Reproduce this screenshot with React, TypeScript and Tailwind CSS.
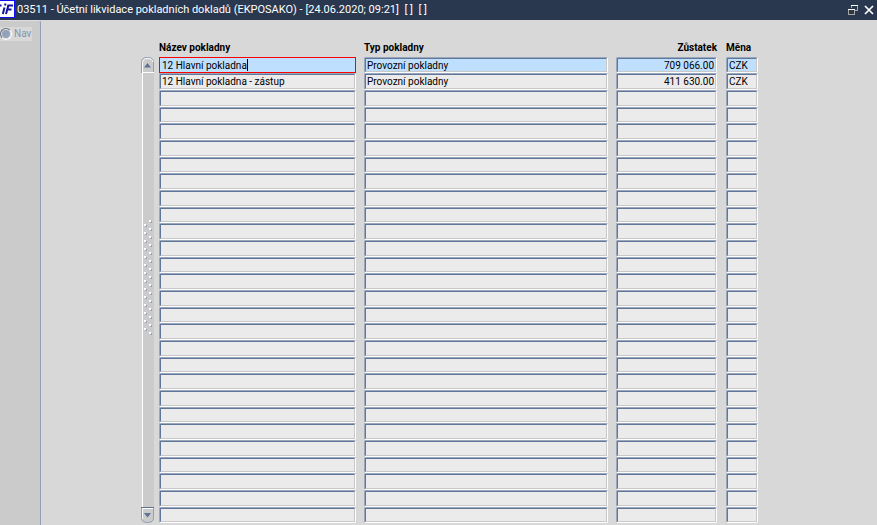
import { useState } from "react";
import clsx from "clsx";

type CashDesk = {
  name: string;
  type: string;
  balance: string;
  currency: string;
};

type FieldProps = {
  label: string;
  value: string;
  selected?: boolean;
  current?: boolean;
  alignRight?: boolean;
  onFocus: () => void;
};

const ROW_COUNT = 28;

const CASH_DESKS: CashDesk[] = [
  {
    name: "12 Hlavní pokladna",
    type: "Provozní pokladny",
    balance: "709 066.00",
    currency: "CZK",
  },
  {
    name: "12 Hlavní pokladna - zástup",
    type: "Provozní pokladny",
    balance: "411 630.00",
    currency: "CZK",
  },
];

const EMPTY: CashDesk = { name: "", type: "", balance: "", currency: "" };

const ROWS = Array.from({ length: ROW_COUNT }, (_, i) => CASH_DESKS[i] ?? EMPTY);

function Field({
  label,
  value,
  selected,
  current,
  alignRight,
  onFocus,
}: FieldProps) {
  return (
    <div
      className={clsx(
        "relative h-full",
        current
          ? "bg-[#ff0000] p-px"
          : "rounded-[2px] border border-t-[#9aa7bb] border-r-white border-b-white border-l-[#9aa7bb]",
      )}
    >
      <input
        type="text"
        readOnly
        aria-label={label}
        defaultValue={value}
        onFocus={onFocus}
        className={clsx(
          "block h-full w-full text-[10px] leading-3 text-black outline-none",
          selected ? "bg-[#bfdfff]" : "bg-[#ebebeb]",
          current
            ? "px-0.5"
            : "border border-t-[#60769a] border-r-[#c8c8c8] border-b-[#c8c8c8] border-l-[#60769a] px-px",
          alignRight && "text-right",
        )}
      />
      {current && (
        <span className="pointer-events-none absolute top-0.5 left-[3px] h-3 border-r border-black text-[10px] leading-3 whitespace-pre text-transparent select-none">
          {value}
        </span>
      )}
    </div>
  );
}

function TitleBar() {
  return (
    <header className="flex h-5 items-center bg-[#2a384f] pr-[3px] text-white">
      <svg
        viewBox="0 0 15 18"
        className="h-[18px] w-[15px] self-start"
        aria-hidden="true"
      >
        <rect width="15" height="18" fill="#1010f0" />
        <rect width="14" height="16" y="1" fill="#fff" />
        <path
          d="M0 5.500h1.500M4.500 7.500 2.800 14M5.500 3.500 5 5.500M8.500 5 6 14M7.500 9.500h4"
          stroke="#14149c"
          strokeWidth="2"
          fill="none"
        />
        <path d="M7.500 5.500h5.500" stroke="#14149c" strokeWidth="2" />
      </svg>
      <h1 className="ml-0.5 flex-1 pb-px text-[11px] leading-4 whitespace-pre">
        03511 - Účetní likvidace pokladních dokladů (EKPOSAKO) - [24.06.2020;
        09:21]{"  [ ]  [ ]"}
      </h1>
      <button type="button" aria-label="Obnovit" className="mr-1.5">
        <svg viewBox="0 0 10 10" className="size-2.5" shapeRendering="crispEdges">
          <path d="M3.500 3V.5h6v5H7M.5 4v5.500h6V4" fill="none" stroke="#a9a69f" />
          <path d="M3 .5h7M0 4.500h7" fill="none" stroke="#fff" />
        </svg>
      </button>
      <button type="button" aria-label="Zavřít">
        <svg viewBox="0 0 10 10" className="size-2.5">
          <path d="m1 1 8 8M9 1 1 9" stroke="#fff" strokeWidth="1.700" />
        </svg>
      </button>
    </header>
  );
}

function ScrollRail() {
  return (
    <div className="mt-[17px] flex w-3 flex-col items-stretch border-l border-white bg-[#cbcbcb]">
      <button type="button" aria-label="Nahoru" className="-ml-0.5 h-4 bg-[#d8d8d8]">
        <svg viewBox="0 0 13 16" className="h-4 w-[13px]">
          <path d="M.5 16V5Q.5.5 6.500.5T12.500 5v11" fill="#cbcbcb" stroke="#91a0b8" />
          <path d="M1.500 15V6Q1.500 1.500 6.500 1.500T12 5M1 15.500h12" fill="none" stroke="#fff" />
          <path d="M6.500 6 10 10.500H3z" fill="#5d7396" />
        </svg>
      </button>
      <div className="flex flex-1 items-center justify-center">
        <svg viewBox="0 0 9 116" className="-mt-6 h-[116px] w-[9px]" shapeRendering="crispEdges">
          {Array.from({ length: 29 }, (_, i) => {
            const x = i % 2 === 0 ? 5 : 0;
            return (
              <g key={i}>
                <rect x={x + 1} y={i * 4 + 1} width="2" height="2" fill="#98a6bd" />
                <rect x={x} y={i * 4} width="2" height="2" fill="#fff" />
              </g>
            );
          })}
        </svg>
      </div>
      <button type="button" aria-label="Dolů" className="-ml-0.5 h-4 bg-[#d8d8d8]">
        <svg viewBox="0 0 13 16" className="h-4 w-[13px]">
          <path d="M.5 0v11q0 4.500 6 4.500t6-4.500V0" fill="#cbcbcb" stroke="#91a0b8" />
          <path d="M1.500 12V1.500H12" fill="none" stroke="#fff" />
          <path d="M0 .5h13" stroke="#5d7396" />
          <path d="M3 6h7L6.500 10.500z" fill="#5d7396" />
        </svg>
      </button>
    </div>
  );
}

export default function App() {
  const [selected, setSelected] = useState(0);

  return (
    <div className="flex min-h-screen flex-col bg-[#d8d8d8] font-[Roboto,Arial,sans-serif]">
      <TitleBar />
      <div className="flex flex-1">
        <aside className="w-[41px] shrink-0 rounded-tr-[3px] border-t border-r border-t-[#dedede] border-r-[#91a0b8] bg-[#cbcbcb] pt-1.5">
          <label className="flex h-3.5 w-8 items-center gap-0.5 bg-[#d8d8d8] text-[10px] leading-3.5 text-[#8495b0]">
            <input
              type="radio"
              name="nav"
              className="size-3 shrink-0 appearance-none rounded-full border border-t-[#6f7580] border-r-white border-b-white border-l-[#6f7580] bg-[#92a2bb] shadow-[inset_0_0_0_1px_#e4e4e4]"
            />
            Nav
          </label>
        </aside>

        <main className="flex flex-1 gap-[5px] pt-5 pr-[119px] pb-0.5 pl-[101px]">
          <ScrollRail />
          <table className="w-full table-fixed border-collapse">
            <colgroup>
              <col className="w-[205px]" />
              <col />
              <col className="w-[110px]" />
              <col className="w-8" />
            </colgroup>
            <thead>
              <tr className="h-[17px] text-left text-[10px] leading-3 text-black">
                <th className="p-0 pt-0.5 align-top">Název pokladny</th>
                <th className="p-0 pt-0.5 align-top">Typ pokladny</th>
                <th className="p-0 pt-0.5 pr-[9px] text-right align-top">Zůstatek</th>
                <th className="p-0 pt-0.5 align-top">Měna</th>
              </tr>
            </thead>
            <tbody>
              {ROWS.map((row, i) => {
                const common = {
                  selected: i === selected,
                  onFocus: () => setSelected(i),
                };
                const cell = i % 3 === 0 ? "h-4 p-0" : "h-[17px] p-0";
                return (
                  <tr key={i}>
                    <td className={clsx(cell, "pr-2")}>
                      <Field
                        label="Název pokladny"
                        value={row.name}
                        current={i === selected}
                        {...common}
                      />
                    </td>
                    <td className={clsx(cell, "pr-2")}>
                      <Field label="Typ pokladny" value={row.type} {...common} />
                    </td>
                    <td className={clsx(cell, "pr-[9px]")}>
                      <Field
                        label="Zůstatek"
                        value={row.balance}
                        alignRight
                        {...common}
                      />
                    </td>
                    <td className={cell}>
                      <Field label="Měna" value={row.currency} {...common} />
                    </td>
                  </tr>
                );
              })}
            </tbody>
          </table>
        </main>
      </div>
    </div>
  );
}
